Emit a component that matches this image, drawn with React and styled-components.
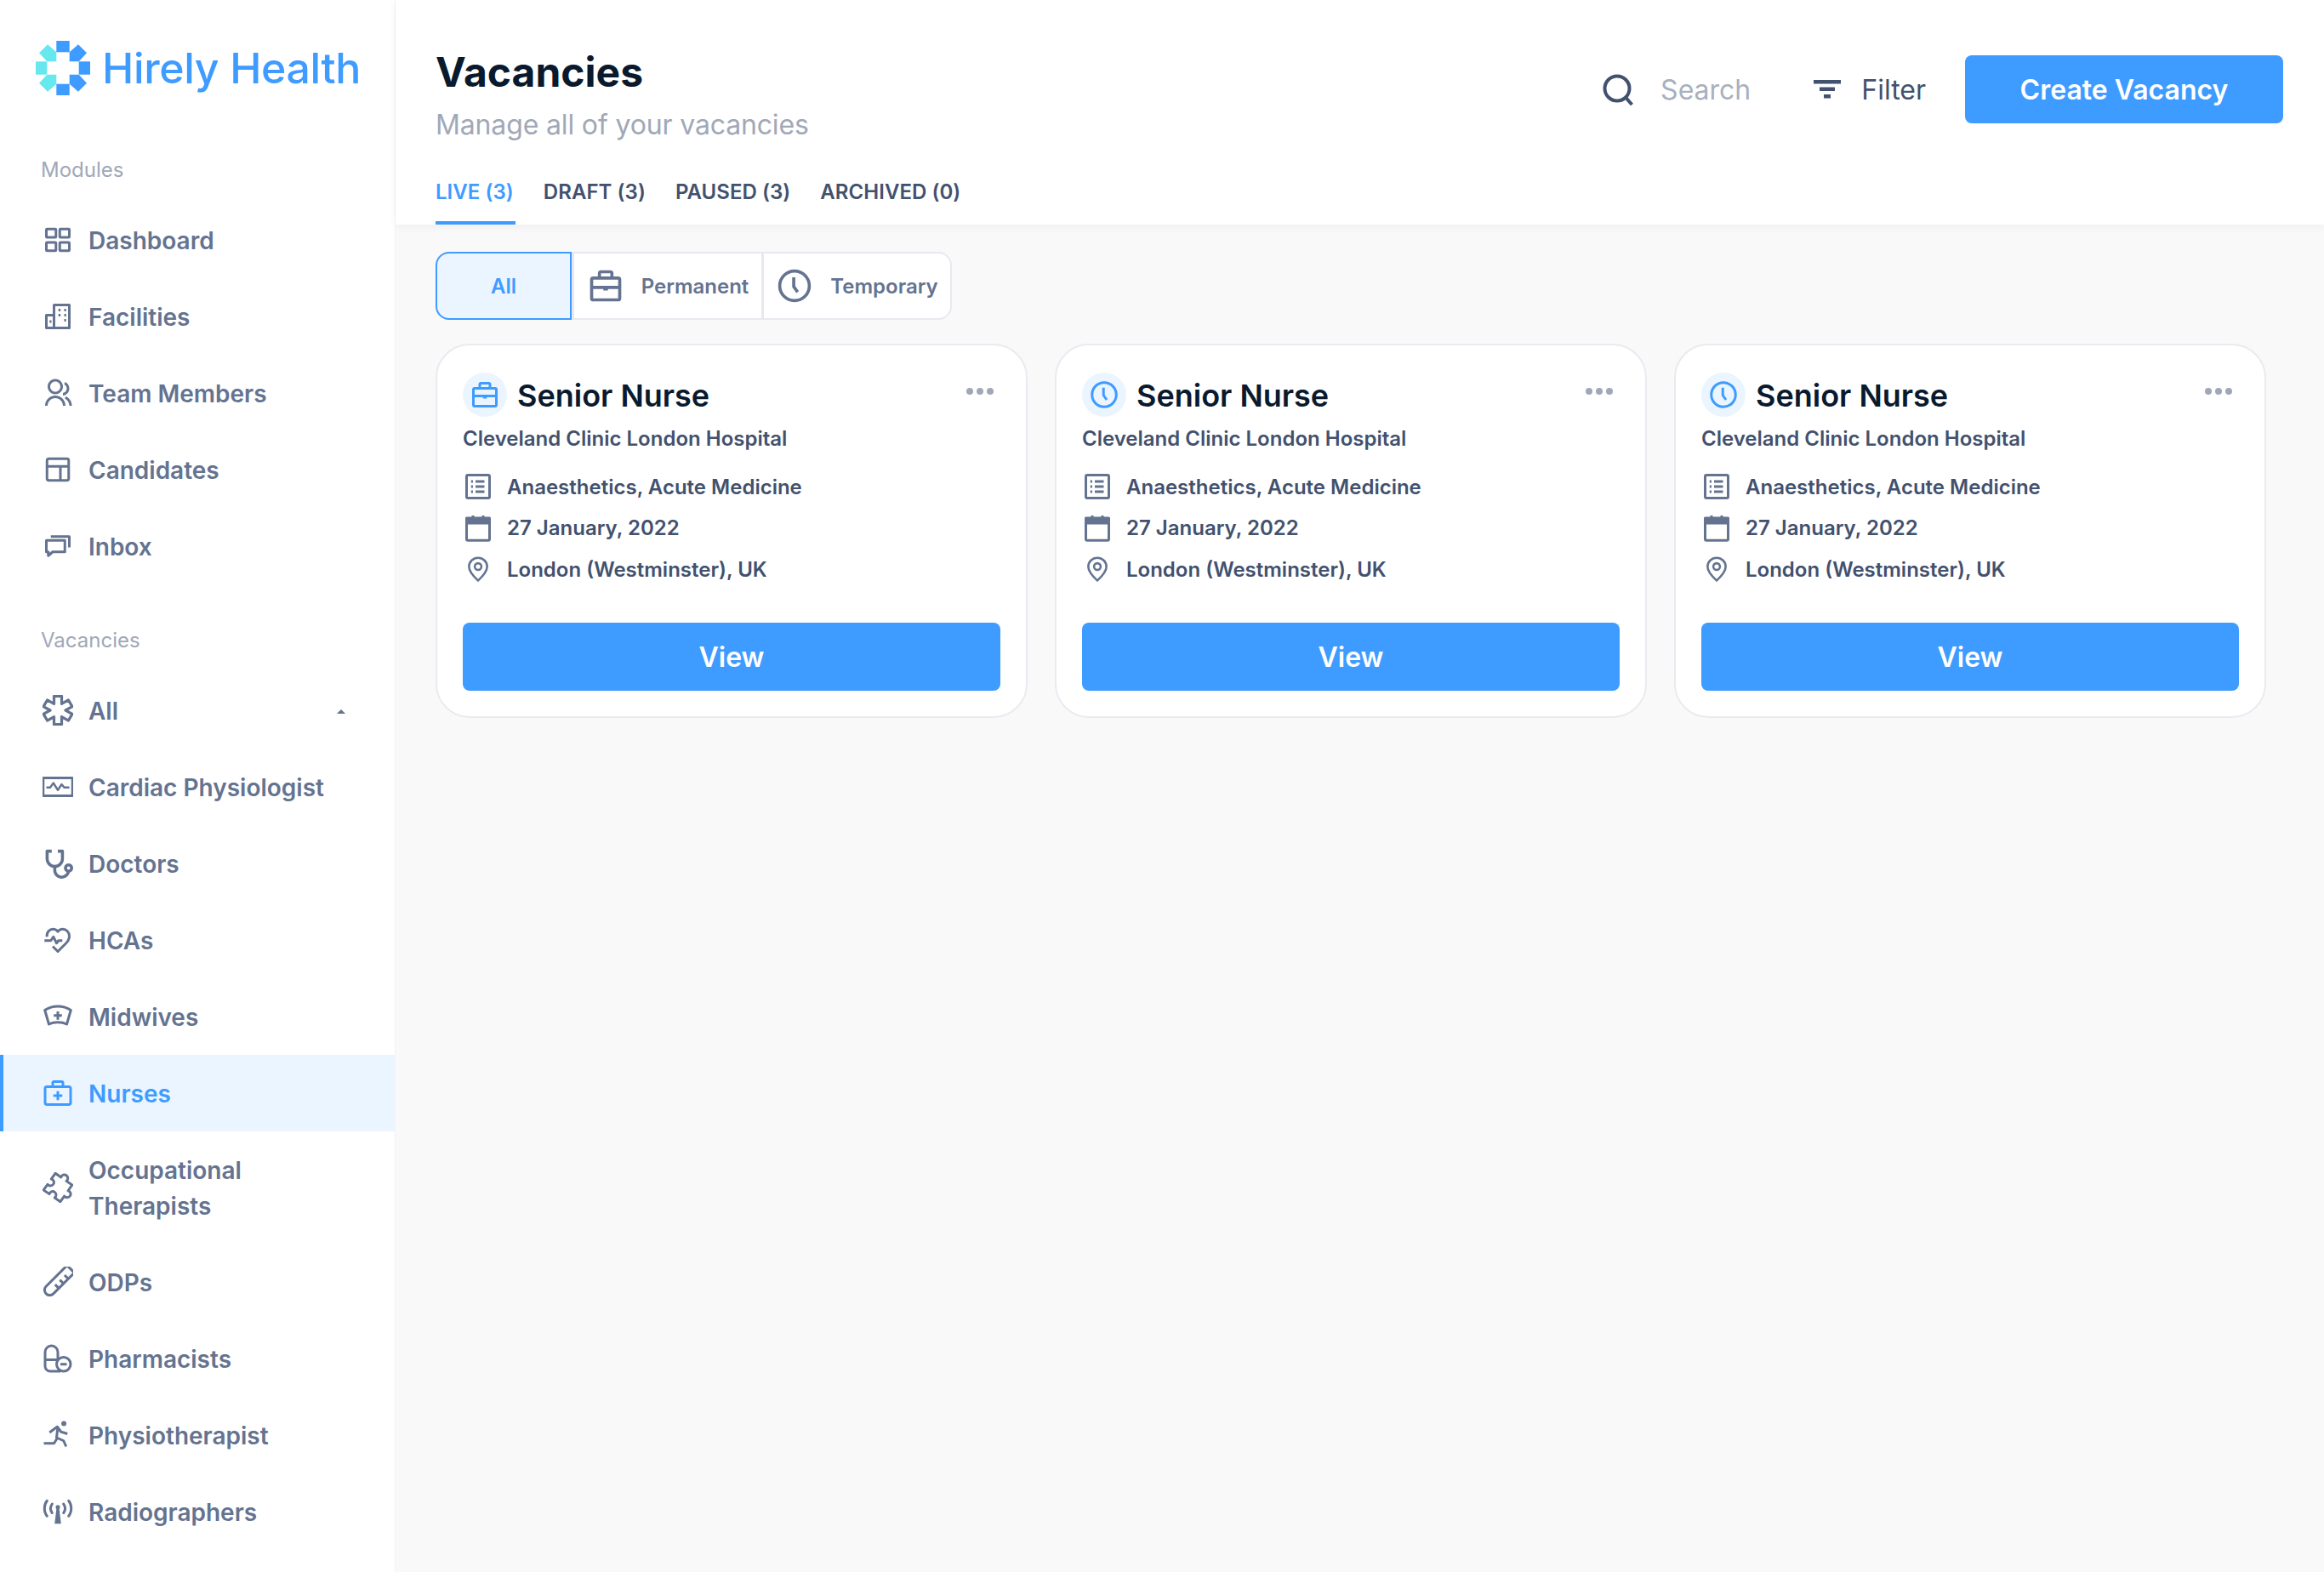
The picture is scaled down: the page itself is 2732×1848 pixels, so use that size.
import React from 'react';
import styled, { createGlobalStyle } from 'styled-components';
import { RiGroupLine, RiStethoscopeLine } from 'react-icons/ri';

const GlobalStyle = createGlobalStyle`
    html, body {
        margin: 0;
        padding: 0;
        background: #f9f9f9;
        font-family: 'Inter', 'Liberation Sans', sans-serif;
    }
    * {
        box-sizing: border-box;
    }
`;

const Layout = styled.div`
    display: flex;
    min-height: 100vh;
`;
const Sidebar = styled.aside`
    width: 465px;
    flex-shrink: 0;
    background: #ffffff;
    border-right: 1px solid #f3f4f6;
    padding-top: 48px;
`;
const Brand = styled.div`
    display: flex;
    align-items: center;
    gap: 14px;
    height: 64px;
    padding-left: 42px;
    margin-bottom: 71px;
`;
const BrandName = styled.span`
    font-size: 50px;
    font-weight: 500;
    color: #3e9bff;
    letter-spacing: -0.35px;
    white-space: nowrap;
`;
const SectionLabel = styled.div`
    font-size: 24px;
    line-height: 34px;
    color: #a0a8b8;
    padding-left: 48px;
    margin-top: ${p => p.$top || 0}px;
    margin-bottom: 20px;
`;
const NavItem = styled.div`
    display: flex;
    align-items: center;
    gap: 18px;
    padding: 25px 48px 23px 50px;
    font-size: 28px;
    line-height: 42px;
    font-weight: 600;
    color: ${p => (p.$active ? '#3e9bff' : '#647390')};
    background: ${p => (p.$active ? '#ebf5ff' : 'transparent')};
    border-left: ${p => (p.$active ? '4px solid #3e9bff' : 'none')};
    padding-left: ${p => (p.$active ? 46 : 50)}px;
    svg {
        flex-shrink: 0;
        width: 36px;
        height: 36px;
        margin-top: -2px;
    }
`;
const NavText = styled.span`
    flex: 1;
    max-width: 290px;
`;
const Caret = styled.span`
    width: 0;
    height: 0;
    margin-left: auto;
    margin-right: 10px;
    border-left: 5px solid transparent;
    border-right: 5px solid transparent;
    border-bottom: 5px solid #647390;
`;
const Main = styled.main`
    flex: 1;
    min-width: 0;
`;
const Header = styled.header`
    height: 264px;
    background: #ffffff;
    padding: 0 48px 0 47px;
    box-shadow: 0 2px 10px rgba(20, 30, 50, 0.05);
    display: flex;
    flex-direction: column;
    justify-content: space-between;
`;
const HeaderTop = styled.div`
    display: flex;
    justify-content: space-between;
    align-items: flex-start;
`;
const TitleBlock = styled.div`
    padding-top: 54px;
`;
const Title = styled.h1`
    margin: 0;
    font-size: 48px;
    line-height: 62px;
    font-weight: 700;
    color: #0a1a2e;
`;
const Subtitle = styled.div`
    font-size: 32px;
    line-height: 40px;
    letter-spacing: -0.15px;
    margin-top: 11px;
    color: #a0a8b8;
`;
const Actions = styled.div`
    display: flex;
    align-items: center;
    padding-top: 65px;
`;
const SearchBox = styled.div`
    display: flex;
    align-items: center;
    gap: 31px;
    font-size: 32px;
    color: #a9b0be;
    margin-right: 74px;
    svg {
        width: 37px;
        height: 37px;
        color: #42516e;
    }
`;
const FilterBox = styled.div`
    display: flex;
    align-items: center;
    gap: 24px;
    font-size: 32px;
    color: #42516e;
    margin-right: 46px;
    svg {
        width: 32px;
        height: 22px;
    }
`;
const PrimaryButton = styled.button`
    height: 80px;
    border: none;
    border-radius: 8px;
    background: #3e9bff;
    color: #ffffff;
    font-family: inherit;
    font-size: 32px;
    font-weight: 600;
    width: ${p => p.$width || '100%'};
`;
const Tabs = styled.nav`
    display: flex;
    gap: 33px;
`;
const Tab = styled.div`
    font-size: 24px;
    font-weight: 600;
    letter-spacing: 0.05px;
    line-height: 30px;
    padding-bottom: 19px;
    padding-right: 2px;
    color: ${p => (p.$active ? '#3e9bff' : '#42516e')};
    border-bottom: 4px solid ${p => (p.$active ? '#3e9bff' : 'transparent')};
`;
const Content = styled.div`
    padding: 32px 0 0 47px;
`;
const Segments = styled.div`
    display: inline-flex;
    height: 80px;
    background: #ffffff;
    border: 2px solid #e8e9f0;
    border-radius: 16px;
    margin-bottom: 28px;
    vertical-align: top;
`;
const Segment = styled.div`
    display: flex;
    align-items: center;
    justify-content: center;
    gap: 20px;
    font-size: 24px;
    font-weight: 600;
    color: ${p => (p.$active ? '#3e9bff' : '#647390')};
    background: ${p => (p.$active ? '#ebf5ff' : 'transparent')};
    width: ${p => p.$width}px;
    margin: ${p => (p.$active ? '-2px 0 -2px -2px' : '0')};
    border: ${p => (p.$active ? '2px solid #3e9bff' : 'none')};
    border-radius: ${p => (p.$active ? '16px 0 0 16px' : '0')};
    & + & {
        border-left: ${p => (p.$first ? 'none' : '3px solid #e8e9f0')};
    }
    svg {
        width: 44px;
        height: 44px;
    }
`;
const Cards = styled.div`
    display: grid;
    grid-template-columns: repeat(3, 696px);
    gap: 32px;
`;
const Card = styled.section`
    position: relative;
    height: 440px;
    background: #ffffff;
    border: 2px solid #e8ebf0;
    border-radius: 40px;
    padding: 32px 30px 30px;
    display: flex;
    flex-direction: column;
`;
const CardHead = styled.div`
    display: flex;
    align-items: center;
    gap: 12px;
    height: 52px;
`;
const CardBadge = styled.div`
    width: 52px;
    height: 52px;
    border-radius: 50%;
    background: #ebf5ff;
    color: #3e9bff;
    display: flex;
    align-items: center;
    justify-content: center;
    svg {
        width: 36px;
        height: 36px;
    }
`;
const CardTitle = styled.h2`
    margin: 0;
    padding-top: 2px;
    font-size: 36px;
    font-weight: 600;
    color: #0a1a2e;
`;
const More = styled.svg`
    position: absolute;
    top: 50px;
    right: 38px;
    width: 32px;
    height: 8px;
    fill: #a0a8b8;
`;
const Hospital = styled.div`
    font-size: 24px;
    line-height: 32px;
    font-weight: 600;
    color: #42516e;
    margin-top: 10px;
    margin-bottom: 16px;
`;
const Detail = styled.div`
    display: flex;
    align-items: center;
    gap: 16px;
    height: 48.5px;
    font-size: 24px;
    font-weight: 600;
    color: #42516e;
    svg {
        width: 36px;
        height: 36px;
        color: #647390;
    }
`;
const CardFooter = styled.div`
    margin-top: auto;
`;

const Line = ({ children, width = 2 }) => (
    <svg viewBox="0 0 24 24" fill="none" stroke="currentColor" strokeWidth={width} strokeLinejoin="round">
        {children}
    </svg>
);

const Logo = () => (
    <svg width="64" height="64" viewBox="0 0 64 64" style={{ flexShrink: 0 }}>
        <g fill="#66e8ee">
            <polygon points="14,4.3 24.3,13.3 24.3,24.3 13.3,24.3 4,14.3" />
            <polygon points="14,59.7 24.3,50.7 24.3,39.7 13.3,39.7 4,49.7" />
            <rect x="0" y="24.3" width="13.3" height="15.4" />
        </g>
        <g fill="#3e9bff">
            <polygon points="50,4.3 39.7,13.3 39.7,24.3 50.7,24.3 60,14.3" />
            <polygon points="50,59.7 39.7,50.7 39.7,39.7 50.7,39.7 60,49.7" />
            <rect x="50.7" y="24.3" width="13.3" height="15.4" />
            <rect x="24.3" y="0" width="15.4" height="13.3" />
            <rect x="24.3" y="50.7" width="15.4" height="13.3" />
        </g>
    </svg>
);
const GridIcon = () => (
    <Line>
        <rect x="3" y="3.5" width="7.5" height="6.5" rx="0.5" />
        <rect x="13.5" y="3.5" width="7.5" height="6.5" rx="0.5" />
        <rect x="3" y="14" width="7.5" height="6.5" rx="0.5" />
        <rect x="13.5" y="14" width="7.5" height="6.5" rx="0.5" />
    </Line>
);
const BuildingIcon = () => (
    <Line>
        <path d="M9 21V3h12v18zM9 11H3v10h6" />
        <path d="M12.5 7h1.6M17 7h1.5M17 11h1.5M17 15h1.5M12.5 11h1.6M5.5 16h1.5" />
    </Line>
);
const LayoutIcon = () => (
    <Line>
        <rect x="3.5" y="3.5" width="17" height="17" rx="1.5" />
        <path d="M3.5 9.5h17M14 9.5v11" />
    </Line>
);
const BubblesIcon = () => (
    <Line>
        <path d="M3 7.5h14.5v9H8l-3.5 3v-3H3z" />
        <path d="M6.5 4.5H21V13" />
    </Line>
);
const Asterisk = () => (
    <svg viewBox="2 2 20 20" fill="none" stroke="currentColor" strokeWidth="1.8" strokeLinejoin="round">
        <path d="M9.5 2.8h5v5l4.4-2.5 2.5 4.3-4.4 2.4 4.4 2.4-2.5 4.3-4.4-2.5v5h-5v-5l-4.4 2.5-2.5-4.3 4.4-2.4-4.4-2.4 2.5-4.3 4.4 2.5z" />
    </svg>
);
const Monitor = () => (
    <Line>
        <rect x="0.5" y="5" width="23" height="14" />
        <path d="M3 12.5h3l2.5-3.5 3.5 5.5 3-4.5 2 2.5h4" strokeWidth="1.6" />
    </Line>
);
const HeartIcon = () => (
    <Line>
        <path d="M3.500 9.500C3 6 5.500 3.500 8.200 3.500c1.600 0 3 .8 3.800 2 .8-1.200 2.200-2 3.800-2 3 0 5.200 2.500 5.200 5.500 0 2.500-1.500 4.500-3 6l-6 6-4-4" />
        <path d="M1.500 12.500h5l2-3 2.500 5 1.500-2h3" />
    </Line>
);
const NurseCap = () => (
    <Line>
        <path d="M1.800 7c6-4 14.400-4 20.400 0l-3.200 11c-4-2-10-2-14 0z" />
        <path d="M12 8v6.500M8.800 11.200h6.400" />
    </Line>
);
const KitIcon = () => (
    <Line>
        <rect x="2" y="7" width="20" height="14" rx="1.500" />
        <path d="M8 7V4a1 1 0 0 1 1-1h6a1 1 0 0 1 1 1v3" />
        <path d="M12 10.500v7M8.500 14h7" />
    </Line>
);
const PuzzleIcon = () => (
    <svg viewBox="4.500 4.500 15 15" fill="none" stroke="currentColor" strokeWidth="1.250" strokeLinejoin="round">
        <path
            transform="rotate(35 12 12)"
            d="M7 7h3.400a1.700 1.700 0 1 1 3.200 0H17v3.400a1.700 1.700 0 1 1 0 3.200V17h-3.400a1.700 1.700 0 1 0-3.200 0H7v-3.400a1.700 1.700 0 1 0 0-3.200z"
        />
    </svg>
);
const TubeIcon = () => (
    <svg viewBox="4 4 16 16" fill="none" stroke="currentColor" strokeWidth="1.350" strokeLinejoin="round">
        <g transform="rotate(45 12 12)">
            <path d="M8.500 2.500h7M9.300 2.500V18a2.700 2.700 0 0 0 5.400 0V2.500" />
            <path d="M12 7h2.500M12 10.500h2.500M12 14h2.500" />
        </g>
    </svg>
);
const Pills = () => (
    <Line>
        <path d="M12 13V7a5 5 0 0 0-10 0v11a4 4 0 0 0 4 4h8" />
        <path d="M2 13h10" />
        <circle cx="16.500" cy="16.500" r="5.500" />
        <path d="M14 16.500h5" />
    </Line>
);
const RunnerIcon = () => (
    <Line>
        <circle cx="16.700" cy="3" r="2" fill="currentColor" stroke="none" />
        <path d="M1 18.500h8l2.500-4" />
        <path d="M5.500 10l6-4.500 3 4 5 1.500" />
        <path d="M12 5.500L11 14l5.500 2.500 2 4.500" />
    </Line>
);
const TowerIcon = () => (
    <Line>
        <path d="M7.500 6a6 6 0 0 0 0 7M16.500 6a6 6 0 0 1 0 7M3.500 3.500a10 10 0 0 0 0 12M20.500 3.500a10 10 0 0 1 0 12" strokeLinecap="round" />
        <circle cx="12" cy="8.500" r="1.700" fill="currentColor" stroke="none" />
        <path d="M11 9h2l1.500 12.500h-5z" fill="currentColor" stroke="none" />
    </Line>
);
const ListBox = () => (
    <Line>
        <rect x="3" y="3" width="18" height="18" rx="1" />
        <path d="M10 8h7M10 12h7M10 16h7M6.500 8h1.500M6.500 12h1.500M6.500 16h1.500" />
    </Line>
);
const CalendarIcon = () => (
    <Line>
        <rect x="3" y="4.500" width="18" height="17" rx="1" />
        <path d="M3 4h18v4H3z" fill="currentColor" />
        <path d="M8 2v3M16 2v3" />
    </Line>
);
const PinIcon = () => (
    <Line width={1.700}>
        <path d="M12 21C9 18.200 4.900 14.500 4.900 10.200a7.100 7.100 0 0 1 14.200 0C19.100 14.500 15 18.200 12 21z" />
        <circle cx="12" cy="10" r="2.600" />
    </Line>
);
const BriefcaseIcon = () => (
    <Line>
        <rect x="3" y="7" width="18" height="14" rx="1" />
        <path d="M8 7V4a1 1 0 0 1 1-1h6a1 1 0 0 1 1 1v3M3 13h18" />
        <path d="M10.500 12.500h3v2.500h-3z" fill="currentColor" stroke="none" />
    </Line>
);
const ClockIcon = () => (
    <Line>
        <circle cx="12" cy="12" r="9.500" />
        <path d="M11.500 6.500v6l2.500 3.500" />
    </Line>
);
const SearchIcon = () => (
    <svg viewBox="0 0 37 37" fill="none" stroke="currentColor" strokeWidth="4">
        <circle cx="17" cy="17" r="14.500" />
        <path d="M27 27.500l7.500 8.500" />
    </svg>
);
const FilterIcon = () => (
    <svg viewBox="0 0 32 22" fill="currentColor">
        <rect x="0" y="0" width="32" height="4.500" />
        <rect x="7" y="8.500" width="18" height="4.500" />
        <rect x="12" y="17" width="8" height="4.500" />
    </svg>
);

const modules = [
    { label: 'Dashboard', icon: <GridIcon /> },
    { label: 'Facilities', icon: <BuildingIcon /> },
    { label: 'Team Members', icon: <RiGroupLine /> },
    { label: 'Candidates', icon: <LayoutIcon /> },
    { label: 'Inbox', icon: <BubblesIcon /> },
];
const vacancies = [
    { label: 'All', icon: <Asterisk />, caret: true },
    { label: 'Cardiac Physiologist', icon: <Monitor /> },
    { label: 'Doctors', icon: <RiStethoscopeLine viewBox="2 2 20 20" /> },
    { label: 'HCAs', icon: <HeartIcon /> },
    { label: 'Midwives', icon: <NurseCap /> },
    { label: 'Nurses', icon: <KitIcon />, active: true },
    { label: 'Occupational Therapists', icon: <PuzzleIcon /> },
    { label: 'ODPs', icon: <TubeIcon /> },
    { label: 'Pharmacists', icon: <Pills /> },
    { label: 'Physiotherapist', icon: <RunnerIcon /> },
    { label: 'Radiographers', icon: <TowerIcon /> },
];
const tabs = ['LIVE (3)', 'DRAFT (3)', 'PAUSED (3)', 'ARCHIVED (0)'];
const cardIcons = [<BriefcaseIcon />, <ClockIcon />, <ClockIcon />];

const renderNav = item => (
    <NavItem key={item.label} $active={item.active}>
        {item.icon}
        <NavText>{item.label}</NavText>
        {item.caret && <Caret />}
    </NavItem>
);

export default function App() {
    return (
        <Layout>
            <GlobalStyle />
            <Sidebar>
                <Brand>
                    <Logo />
                    <BrandName>Hirely Health</BrandName>
                </Brand>
                <SectionLabel>Modules</SectionLabel>
                {modules.map(renderNav)}
                <SectionLabel $top={49}>Vacancies</SectionLabel>
                {vacancies.map(renderNav)}
            </Sidebar>
            <Main>
                <Header>
                    <HeaderTop>
                        <TitleBlock>
                            <Title>Vacancies</Title>
                            <Subtitle>Manage all of your vacancies</Subtitle>
                        </TitleBlock>
                        <Actions>
                            <SearchBox>
                                <SearchIcon />
                                Search
                            </SearchBox>
                            <FilterBox>
                                <FilterIcon />
                                Filter
                            </FilterBox>
                            <PrimaryButton $width="374px">Create Vacancy</PrimaryButton>
                        </Actions>
                    </HeaderTop>
                    <Tabs>
                        {tabs.map((tab, i) => (
                            <Tab key={tab} $active={i === 0}>{tab}</Tab>
                        ))}
                    </Tabs>
                </Header>
                <Content>
                    <Segments>
                        <Segment $active $width={160}>All</Segment>
                        <Segment $first $width={223}>
                            <BriefcaseIcon />
                            Permanent
                        </Segment>
                        <Segment $width={222}>
                            <ClockIcon />
                            Temporary
                        </Segment>
                    </Segments>
                    <Cards>
                        {cardIcons.map((icon, i) => (
                            <Card key={i}>
                                <CardHead>
                                    <CardBadge>{icon}</CardBadge>
                                    <CardTitle>Senior Nurse</CardTitle>
                                </CardHead>
                                <More viewBox="0 0 32 8">
                                    <circle cx="4" cy="4" r="4" />
                                    <circle cx="16" cy="4" r="4" />
                                    <circle cx="28" cy="4" r="4" />
                                </More>
                                <Hospital>Cleveland Clinic London Hospital</Hospital>
                                <Detail><ListBox />Anaesthetics, Acute Medicine</Detail>
                                <Detail><CalendarIcon />27 January, 2022</Detail>
                                <Detail><PinIcon />London (Westminster), UK</Detail>
                                <CardFooter>
                                    <PrimaryButton>View</PrimaryButton>
                                </CardFooter>
                            </Card>
                        ))}
                    </Cards>
                </Content>
            </Main>
        </Layout>
    );
}
